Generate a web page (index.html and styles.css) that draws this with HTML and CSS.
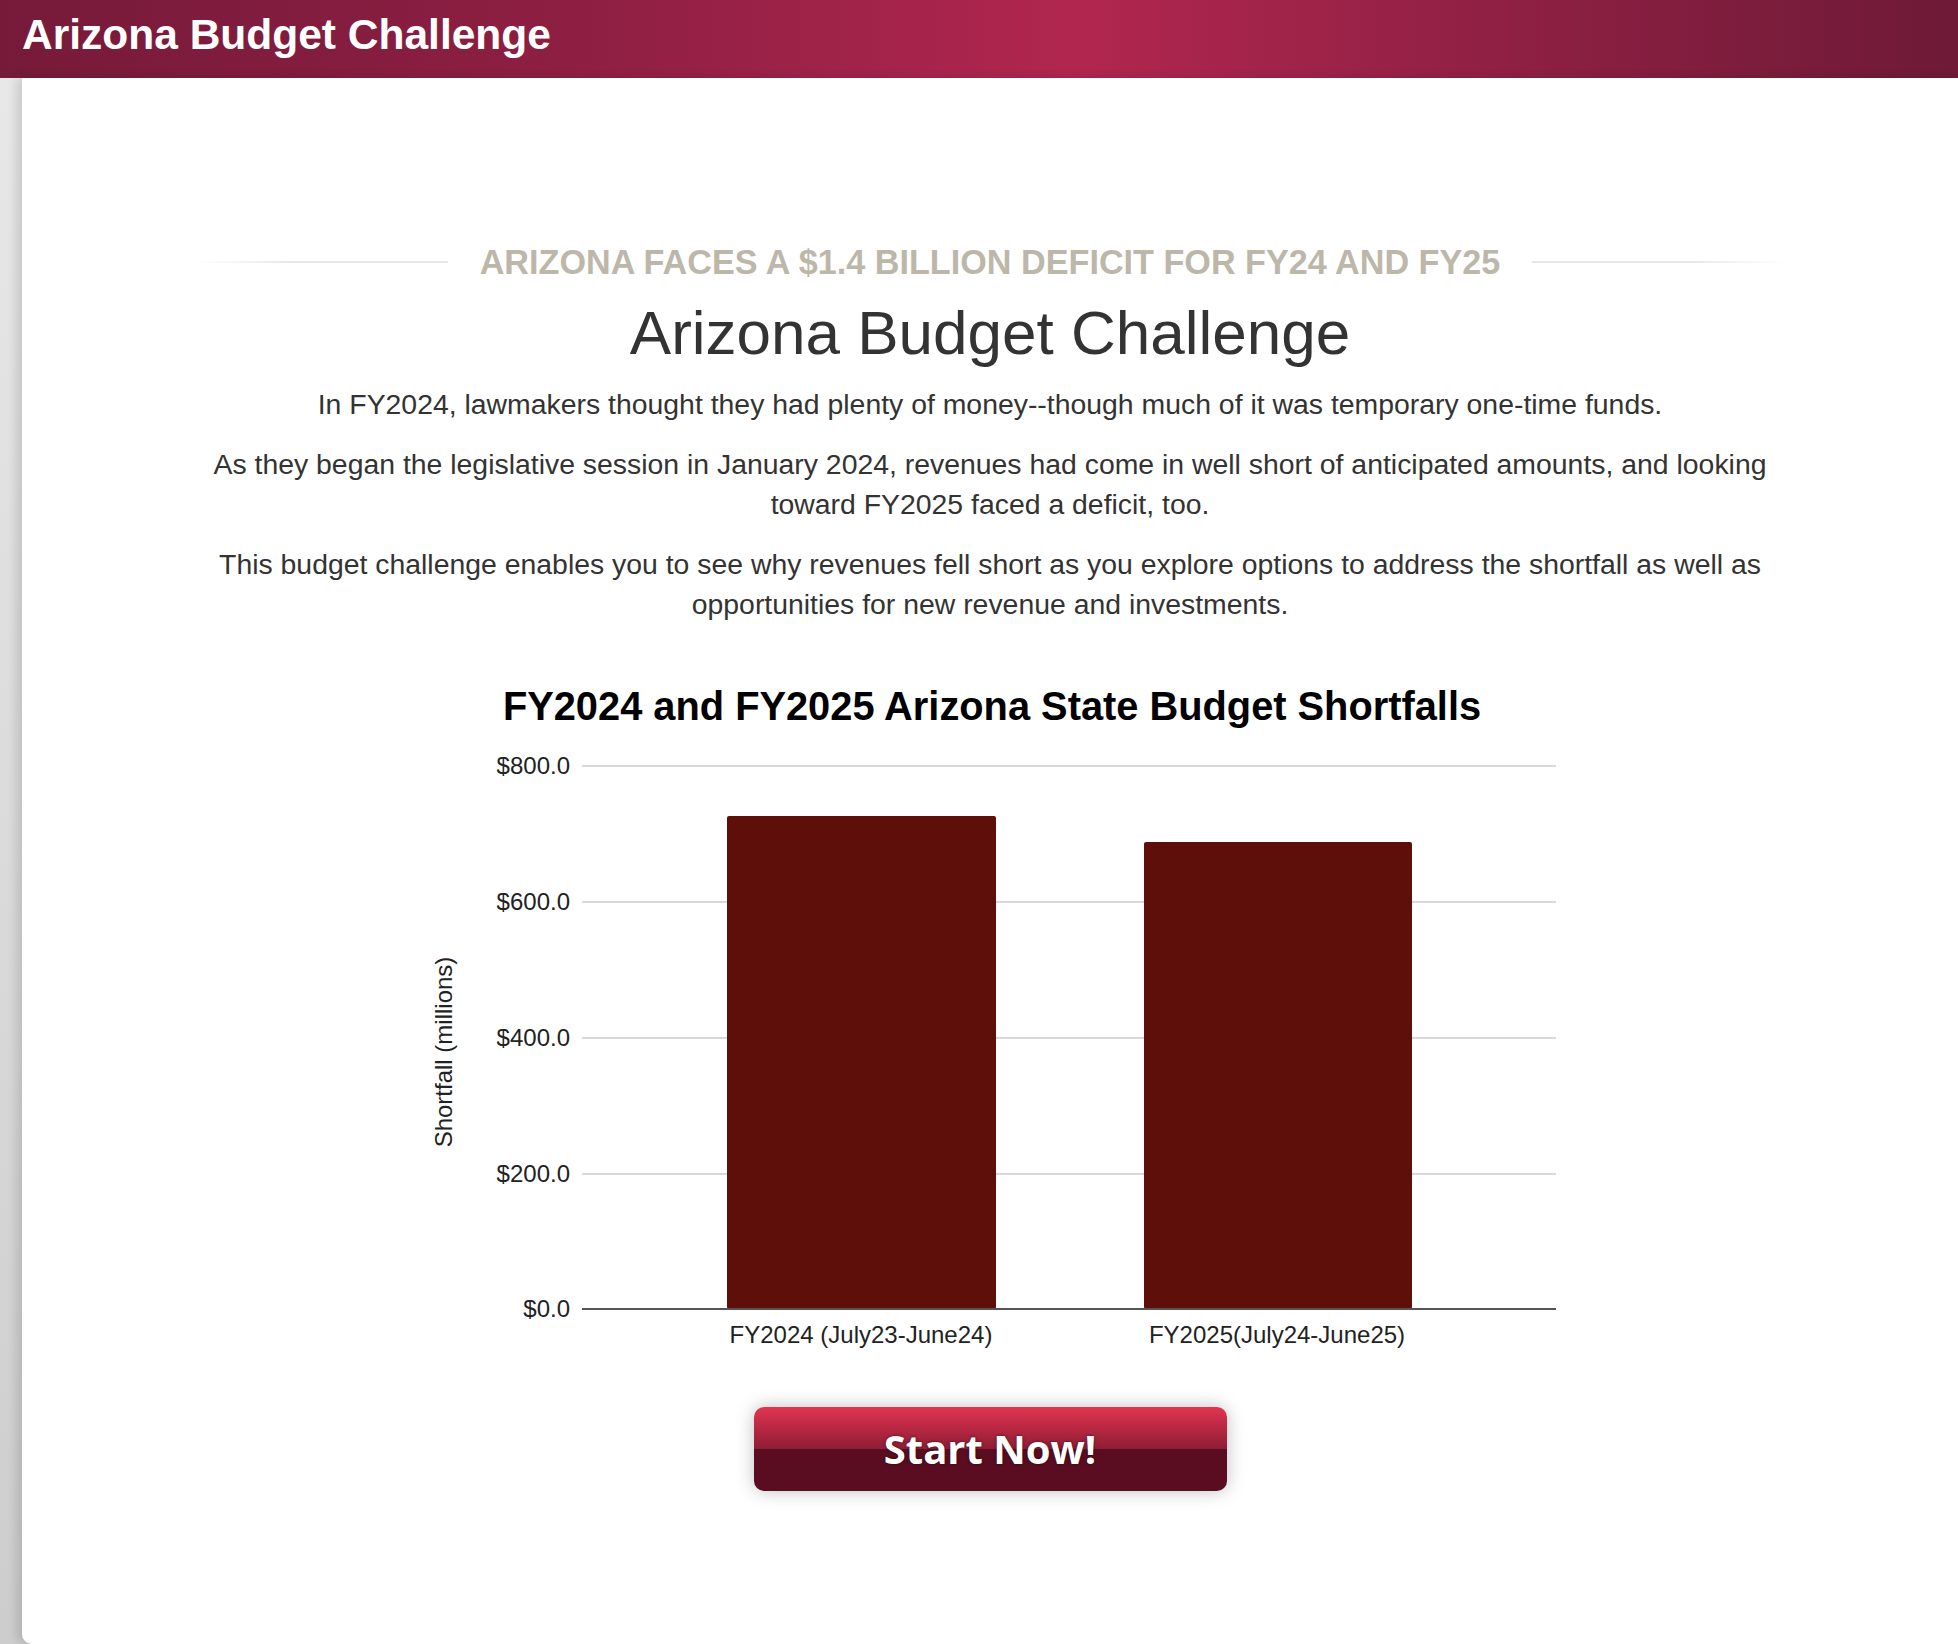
FILE: index.html
```html
<!DOCTYPE html>
<html>
<head>
  <meta name='viewport' content='width=device-width, initial-scale=1.0'>
  <title>Arizona Budget Challenge</title>
  <link rel="stylesheet" href="styles.css">
</head>
<body>
  <div class="topbar">Arizona Budget Challenge</div>

  <div class="panel">
    <div class="content">

      <div class="kicker">
        <span class="kicker-line left"></span>
        <span class="kicker-text">Arizona faces a $1.4 billion deficit for FY24 and FY25</span>
        <span class="kicker-line right"></span>
      </div>

      <h1 class="heading">Arizona Budget Challenge</h1>

      <p>In FY2024, lawmakers thought they had plenty of money--though much of it was temporary one-time funds.</p>
      <p>As they began the legislative session in January 2024, revenues had come in well short of anticipated amounts, and looking toward FY2025 faced a deficit, too.</p>
      <p>This budget challenge enables you to see why revenues fell short as you explore options to address the shortfall as well as opportunities for new revenue and investments.</p>

      <!-- shortfall chart, values in millions -->
      <svg class="chart" width="1180" height="700" viewBox="0 0 1180 700">
        <text class="chart-title" x="592" y="60" text-anchor="middle">FY2024 and FY2025 Arizona State Budget Shortfalls</text>

        <g class="grid">
          <line x1="182" y1="106" x2="1156" y2="106"></line>
          <line x1="182" y1="242" x2="1156" y2="242"></line>
          <line x1="182" y1="378" x2="1156" y2="378"></line>
          <line x1="182" y1="514" x2="1156" y2="514"></line>
        </g>

        <g class="axis-label" text-anchor="end">
          <text x="170" y="114">$800.0</text>
          <text x="170" y="250">$600.0</text>
          <text x="170" y="386">$400.0</text>
          <text x="170" y="522">$200.0</text>
          <text x="170" y="657">$0.0</text>
        </g>

        <text class="axis-label" transform="translate(52,392) rotate(-90)" text-anchor="middle">Shortfall (millions)</text>

        <rect class="bar" x="327" y="156" width="269" height="493" rx="2"></rect>
        <rect class="bar" x="744" y="182" width="268" height="467" rx="2"></rect>

        <line class="baseline" x1="182" y1="649" x2="1156" y2="649"></line>

        <g class="axis-label" text-anchor="middle">
          <text x="461" y="683">FY2024 (July23-June24)</text>
          <text x="877" y="683">FY2025(July24-June25)</text>
        </g>
      </svg>

      <div class="start">
        <a class="start-button" href="#">Start Now!</a>
      </div>

    </div>
  </div>
</body>
</html>
```

FILE: styles.css
```css
body {
  margin: 0;
  background: linear-gradient(to bottom, #e9e9e9, #cdcdcd);
  font-family: "Liberation Sans", Arial, Helvetica, sans-serif;
  color: #333;
}
.topbar {
  height: 78px;
  line-height: 70px;
  padding-left: 22px;
  font-size: 42.5px;
  font-weight: bold;
  color: #fff;
  background: linear-gradient(to right, #761a3a 0%, #8e1f43 30%, #b1264f 55%, #8a1f42 80%, #6e1a36 100%);
}
.panel {
  margin-left: 22px;
  min-height: calc(100vh - 78px);
  background: #fff;
  border-bottom-left-radius: 10px;
  box-shadow: -6px 0 10px rgba(0, 0, 0, 0.12);
}
.content {
  width: 1590px;
  margin: 0 auto;
  padding-top: 164px;
  text-align: center;
}
.kicker {
  display: flex;
  align-items: center;
  gap: 32px;
  height: 40px;
}
.kicker-line {
  flex: 1;
  height: 2px;
}
.kicker-line.left {
  background: linear-gradient(to right, rgba(232, 232, 232, 0), #e6e6e6 40%);
}
.kicker-line.right {
  background: linear-gradient(to left, rgba(232, 232, 232, 0), #e6e6e6 40%);
}
.kicker-text {
  font-size: 34.2px;
  font-weight: bold;
  text-transform: uppercase;
  color: #bdb7aa;
  white-space: nowrap;
}
.heading {
  margin: 16px 0 16px 0;
  font-size: 62px;
  line-height: 70px;
  font-weight: normal;
  color: #333;
}
p {
  margin: 0 0 20px 0;
  font-size: 28.4px;
  line-height: 40px;
}
.chart {
  display: block;
  margin: 36px auto 0 auto;
  font-family: "Liberation Sans", Arial, sans-serif;
}
.chart-title {
  font-size: 39.8px;
  font-weight: bold;
  fill: #000;
}
.grid line {
  stroke: #d9d9d9;
  stroke-width: 2;
}
.baseline {
  stroke: #555;
  stroke-width: 2;
}
.axis-label {
  font-size: 24px;
  fill: #222;
}
.bar {
  fill: #5e0f0a;
}
.start {
  padding: 47px 0 150px 0;
}
.start-button {
  display: inline-block;
  width: 473px;
  height: 84px;
  line-height: 84px;
  border-radius: 10px;
  font-family: "Open Sans", sans-serif;
  font-size: 40px;
  font-weight: bold;
  color: #fff;
  text-decoration: none;
  text-shadow: 0 0 3px rgba(0, 0, 0, 0.6);
  background: linear-gradient(to bottom, #e1354f 0%, #c12a45 20%, #8d1d34 50%, #5a0d20 50%, #5a0d20 100%);
  box-shadow: 0 0 18px rgba(0, 0, 0, 0.25);
}
```
